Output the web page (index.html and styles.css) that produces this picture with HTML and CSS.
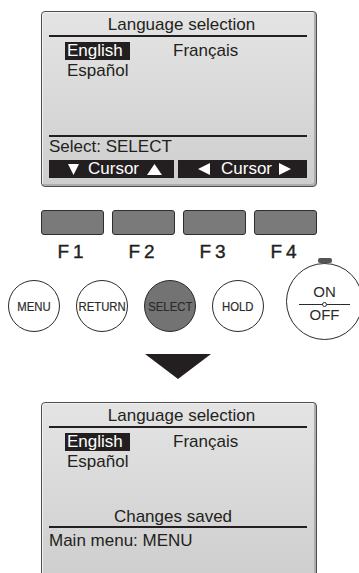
FILE: index.html
```html
<!DOCTYPE html>
<html lang="en">
<head>
<meta charset="utf-8">
<title>Language selection</title>
<link rel="stylesheet" href="styles.css">
</head>
<body>
<div class="page">
  <section class="screen screen-a">
    <div class="title">Language selection</div>
    <div class="rule"></div>
    <div class="langs">
      <span class="lang sel">English</span>
      <span class="lang fr">Français</span>
      <span class="lang">Español</span>
    </div>
    <div class="spacer"></div>
    <div class="rule"></div>
    <div class="status">Select: SELECT</div>
    <div class="bars">
      <div class="bar bar-left">
        <svg class="tri" width="11" height="11" viewBox="0 0 11 11"><polygon points="0,0 11,0 5.5,11" fill="#fff"/></svg>
        <span class="bar-text gap-l1">Cursor</span>
        <svg class="tri gap-l2" width="15" height="11" viewBox="0 0 15 11"><polygon points="7.5,0 15,11 0,11" fill="#fff"/></svg>
      </div>
      <div class="bar bar-right">
        <svg class="tri" width="12" height="12" viewBox="0 0 12 12"><polygon points="12,0 12,12 0,6" fill="#fff"/></svg>
        <span class="bar-text gap-r1">Cursor</span>
        <svg class="tri gap-r2" width="12" height="12" viewBox="0 0 12 12"><polygon points="0,0 12,6 0,12" fill="#fff"/></svg>
      </div>
    </div>
  </section>

  <div class="fkeys">
    <div class="fkey"></div>
    <div class="fkey"></div>
    <div class="fkey"></div>
    <div class="fkey"></div>
  </div>
  <div class="flabels">
    <span>F1</span>
    <span>F2</span>
    <span>F3</span>
    <span>F4</span>
  </div>

  <div class="buttons">
    <div class="rbtn"><span class="rlabel">MENU</span></div>
    <div class="rbtn"><span class="rlabel">RETURN</span></div>
    <div class="rbtn rbtn-dark"><span class="rlabel">SELECT</span></div>
    <div class="rbtn"><span class="rlabel">HOLD</span></div>
    <div class="power">
      <div class="led"></div>
      <div class="onoff">
        <span class="on">ON</span>
        <span class="divider"></span>
        <span class="off">OFF</span>
      </div>
    </div>
  </div>

  <svg class="arrow" width="66" height="25" viewBox="0 0 66 25"><polygon points="0,0 66,0 33,25" fill="#231f20"/></svg>

  <section class="screen screen-b">
    <div class="title">Language selection</div>
    <div class="rule"></div>
    <div class="langs">
      <span class="lang sel">English</span>
      <span class="lang fr">Français</span>
      <span class="lang">Español</span>
    </div>
    <div class="saved">Changes saved</div>
    <div class="rule"></div>
    <div class="status status-b">Main menu: MENU</div>
  </section>
</div>
</body>
</html>
```

FILE: styles.css
```css
html, body {
  margin: 0;
  padding: 0;
  background: #fff;
  width: 359px;
  height: 573px;
  overflow: hidden;
}

body {
  font-family: "Liberation Sans", Arial, sans-serif;
  color: #231f20;
}

.page {
  display: flex;
  flex-direction: column;
  padding-top: 11px;
}

/* LCD screens */
.screen {
  box-sizing: border-box;
  width: 276px;
  height: 176px;
  margin-left: 41px;
  border: 1px solid #4d4d4d;
  border-radius: 4px;
  background: linear-gradient(#e4e4e4, #cecece);
  box-shadow: inset -2px -2px 0 #adadad, inset 1px 1px 0 #f2f2f2;
  padding: 3px 9px 8px 7px;
  display: flex;
  flex-direction: column;
  font-size: 17px;
  flex-shrink: 0;
}

.title {
  line-height: 20px;
  height: 20px;
  text-align: center;
  padding-left: 7px;
}

.rule {
  height: 2px;
  background: #231f20;
  flex-shrink: 0;
}

.langs {
  margin-top: 5px;
  margin-left: 16px;
  display: grid;
  grid-template-columns: 108px auto;
  row-gap: 2px;
  line-height: 18px;
}

.lang {
  padding-left: 2px;
  height: 18px;
  white-space: nowrap;
}

.lang.sel {
  box-sizing: border-box;
  width: 65px;
  background: #231f20;
  color: #fff;
}

.lang.fr {
  padding-left: 0;
}

.spacer {
  flex: 1;
}

.status {
  margin-top: 1px;
  line-height: 18px;
  height: 18px;
  white-space: nowrap;
}

.status-b {
  margin-top: 4px;
}

.saved {
  margin-top: 37px;
  line-height: 18px;
  height: 18px;
  text-align: center;
  padding-right: 10px;
}

.bars {
  margin-top: 4px;
  display: flex;
  gap: 4px;
  height: 18px;
}

.bar {
  background: #231f20;
  color: #fff;
  height: 18px;
  line-height: 18px;
  display: flex;
  align-items: center;
  box-sizing: border-box;
}

.bar-left {
  width: 125px;
  padding-left: 19px;
}

.bar-right {
  flex: 1;
  padding-left: 20px;
}

.tri {
  display: block;
  flex-shrink: 0;
}

.bar-text {
  white-space: nowrap;
}

.gap-l1 { margin-left: 9px; }
.gap-l2 { margin-left: 8px; }
.gap-r1 { margin-left: 11px; }
.gap-r2 { margin-left: 7px; }

/* Function keys */
.fkeys {
  margin-top: 23px;
  margin-left: 41px;
  width: 276px;
  display: grid;
  grid-template-columns: repeat(4, 1fr);
  gap: 8px;
}

.fkey {
  box-sizing: border-box;
  height: 25px;
  background: #7a7a7a;
  border: 1.3px solid #2e2e2e;
  border-radius: 3px;
}

.flabels {
  margin-top: 10px;
  margin-left: 41px;
  width: 276px;
  display: grid;
  grid-template-columns: repeat(4, 1fr);
  gap: 8px;
  font-size: 19px;
  line-height: 13px;
  height: 13px;
  letter-spacing: 4px;
  text-align: center;
  color: #231f20;
  -webkit-text-stroke: 0.4px #231f20;
}

/* Round buttons */
.buttons {
  display: flex;
  align-items: flex-start;
  padding-left: 8px;
  gap: 16px;
  height: 83px;
}

.rbtn {
  box-sizing: border-box;
  flex-shrink: 0;
  width: 52px;
  height: 52px;
  margin-top: 22px;
  border: 1.4px solid #2b2b2b;
  border-radius: 50%;
  background: #fff;
  display: flex;
  align-items: center;
  justify-content: center;
}

.rbtn-dark {
  background: #737373;
}

.rlabel {
  display: inline-block;
  font-size: 13.5px;
  line-height: 13px;
  color: #2b2b2b;
  transform: scaleX(0.84);
  white-space: nowrap;
  -webkit-text-stroke: 0.2px #2b2b2b;
}

.power {
  flex-shrink: 0;
  margin-left: 6px;
  display: flex;
  flex-direction: column;
  align-items: center;
  width: 77px;
}

.led {
  width: 14px;
  height: 5px;
  border-radius: 2px;
  background: #555;
}

.onoff {
  box-sizing: border-box;
  width: 77px;
  height: 77px;
  border: 1.5px solid #2b2b2b;
  border-radius: 50%;
  background: #fff;
  display: flex;
  flex-direction: column;
  align-items: center;
  padding-top: 20px;
  font-size: 15px;
  line-height: 15px;
  color: #2b2b2b;
}

.on {
  height: 15px;
}

.divider {
  position: relative;
  width: 51px;
  height: 1.3px;
  margin-top: 5px;
  background: #2b2b2b;
}

.divider::after {
  content: "";
  position: absolute;
  left: 50%;
  top: 50%;
  width: 3px;
  height: 3px;
  margin-left: -2.5px;
  margin-top: -2.5px;
  border: 1px solid #2b2b2b;
  border-radius: 50%;
  background: #fff;
}

.off {
  margin-top: 2px;
  height: 15px;
}

.arrow {
  display: block;
  margin-top: 13px;
  margin-left: 145px;
  flex-shrink: 0;
}

.screen-b {
  margin-top: 23px;
}
```
